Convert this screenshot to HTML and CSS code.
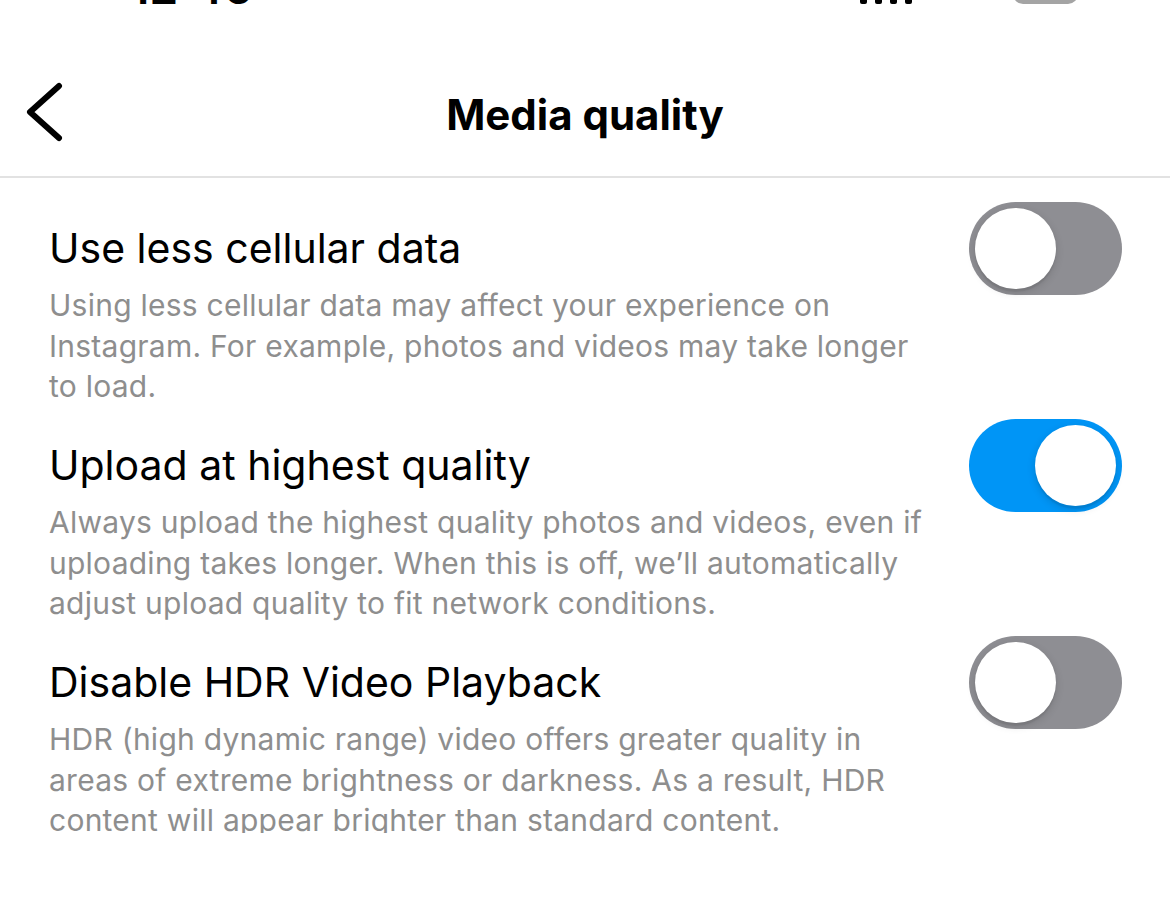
FILE: index.html
```html
<!DOCTYPE html>
<html lang="en">
<head>
    <meta charset="UTF-8">
    <meta name="viewport" content="width=device-width, initial-scale=1.0">
    <title>Media quality</title>
    <link rel="stylesheet" href="styles.css">
</head>
<body>

    <!-- Status bar (scrolled mostly out of view) -->
    <div class="status">
        <span class="time">12:46</span>
        <span class="signal"><i></i><i></i><i></i><i></i></span>
        <span class="battery"></span>
    </div>

    <header class="nav">
        <a href="#" class="back">
            <svg width="40" height="60" viewBox="0 0 40 60">
                <polyline points="35,4 6,30 35,56" fill="none" stroke="#000" stroke-width="6" stroke-linecap="round" stroke-linejoin="round"/>
            </svg>
        </a>
        <h1>Media quality</h1>
        <span></span>
    </header>

    <main class="settings">
        <div class="row">
            <div class="text">
                <div class="label">Use less cellular data</div>
                <p class="desc">Using less cellular data may affect your experience on Instagram. For example, photos and videos may take longer to load.</p>
            </div>
            <span class="toggle"><i></i></span>
        </div>

        <div class="row">
            <div class="text">
                <div class="label">Upload at highest quality</div>
                <p class="desc">Always upload the highest quality photos and videos, even if uploading takes longer. When this is off, we’ll automatically adjust upload quality to fit network conditions.</p>
            </div>
            <span class="toggle on"><i></i></span>
        </div>

        <div class="row">
            <div class="text">
                <div class="label">Disable HDR Video Playback</div>
                <p class="desc">HDR (high dynamic range) video offers greater quality in areas of extreme brightness or darkness. As a result, HDR content will appear brighter than standard content.</p>
            </div>
            <span class="toggle"><i></i></span>
        </div>
    </main>

</body>
</html>
```

FILE: styles.css
```css
body { margin: 0; background: #fff; color: #000; font-family: Inter, "Noto Sans", sans-serif; }

.status { display: flex; align-items: flex-end; height: 4px; overflow: hidden; padding: 0 92px 0 130px; }
.time { font-size: 46px; font-weight: 600; line-height: 34px; }
.signal { display: flex; align-items: flex-end; gap: 8px; margin-left: auto; margin-right: 101px; }
.signal i { display: block; width: 7px; height: 20px; background: #000; border-radius: 2px; }
.battery { display: block; width: 65px; height: 30px; background: #a4a4a4; border-radius: 10px; }

.nav { display: grid; grid-template-columns: 1fr auto 1fr; align-items: center; height: 128px; padding-top: 44px; border-bottom: 2px solid #e2e2e2; }
.back { display: block; width: 40px; height: 60px; margin-left: 24px; }
.back svg { display: block; }
.nav h1 { margin: 6px 0 0; font-size: 42px; font-weight: 700; line-height: 52px; }

.settings { height: 655px; overflow: hidden; padding-top: 24px; box-sizing: border-box; }
.row { display: flex; align-items: flex-start; padding: 0 48px 0 49px; margin-bottom: 12.5px; }
.row:last-child { margin-bottom: 0; }
.text { flex: 1; padding-top: 20px; margin-right: 34px; }
.label { font-size: 41px; line-height: 53px; }
.desc { margin: 10px 0 0; font-size: 30px; letter-spacing: 0.25px; line-height: 40.5px; color: #8e8e8e; }

.toggle { display: flex; flex-shrink: 0; width: 153px; height: 93px; padding: 6px; box-sizing: border-box; border-radius: 47px; background: #8e8e93; }
.toggle i { display: block; width: 81px; height: 81px; border-radius: 50%; background: #fff; box-shadow: 0 3px 8px rgba(0,0,0,.15), 0 3px 1px rgba(0,0,0,.06); }
.toggle.on { justify-content: flex-end; background: #0095f6; }
```
